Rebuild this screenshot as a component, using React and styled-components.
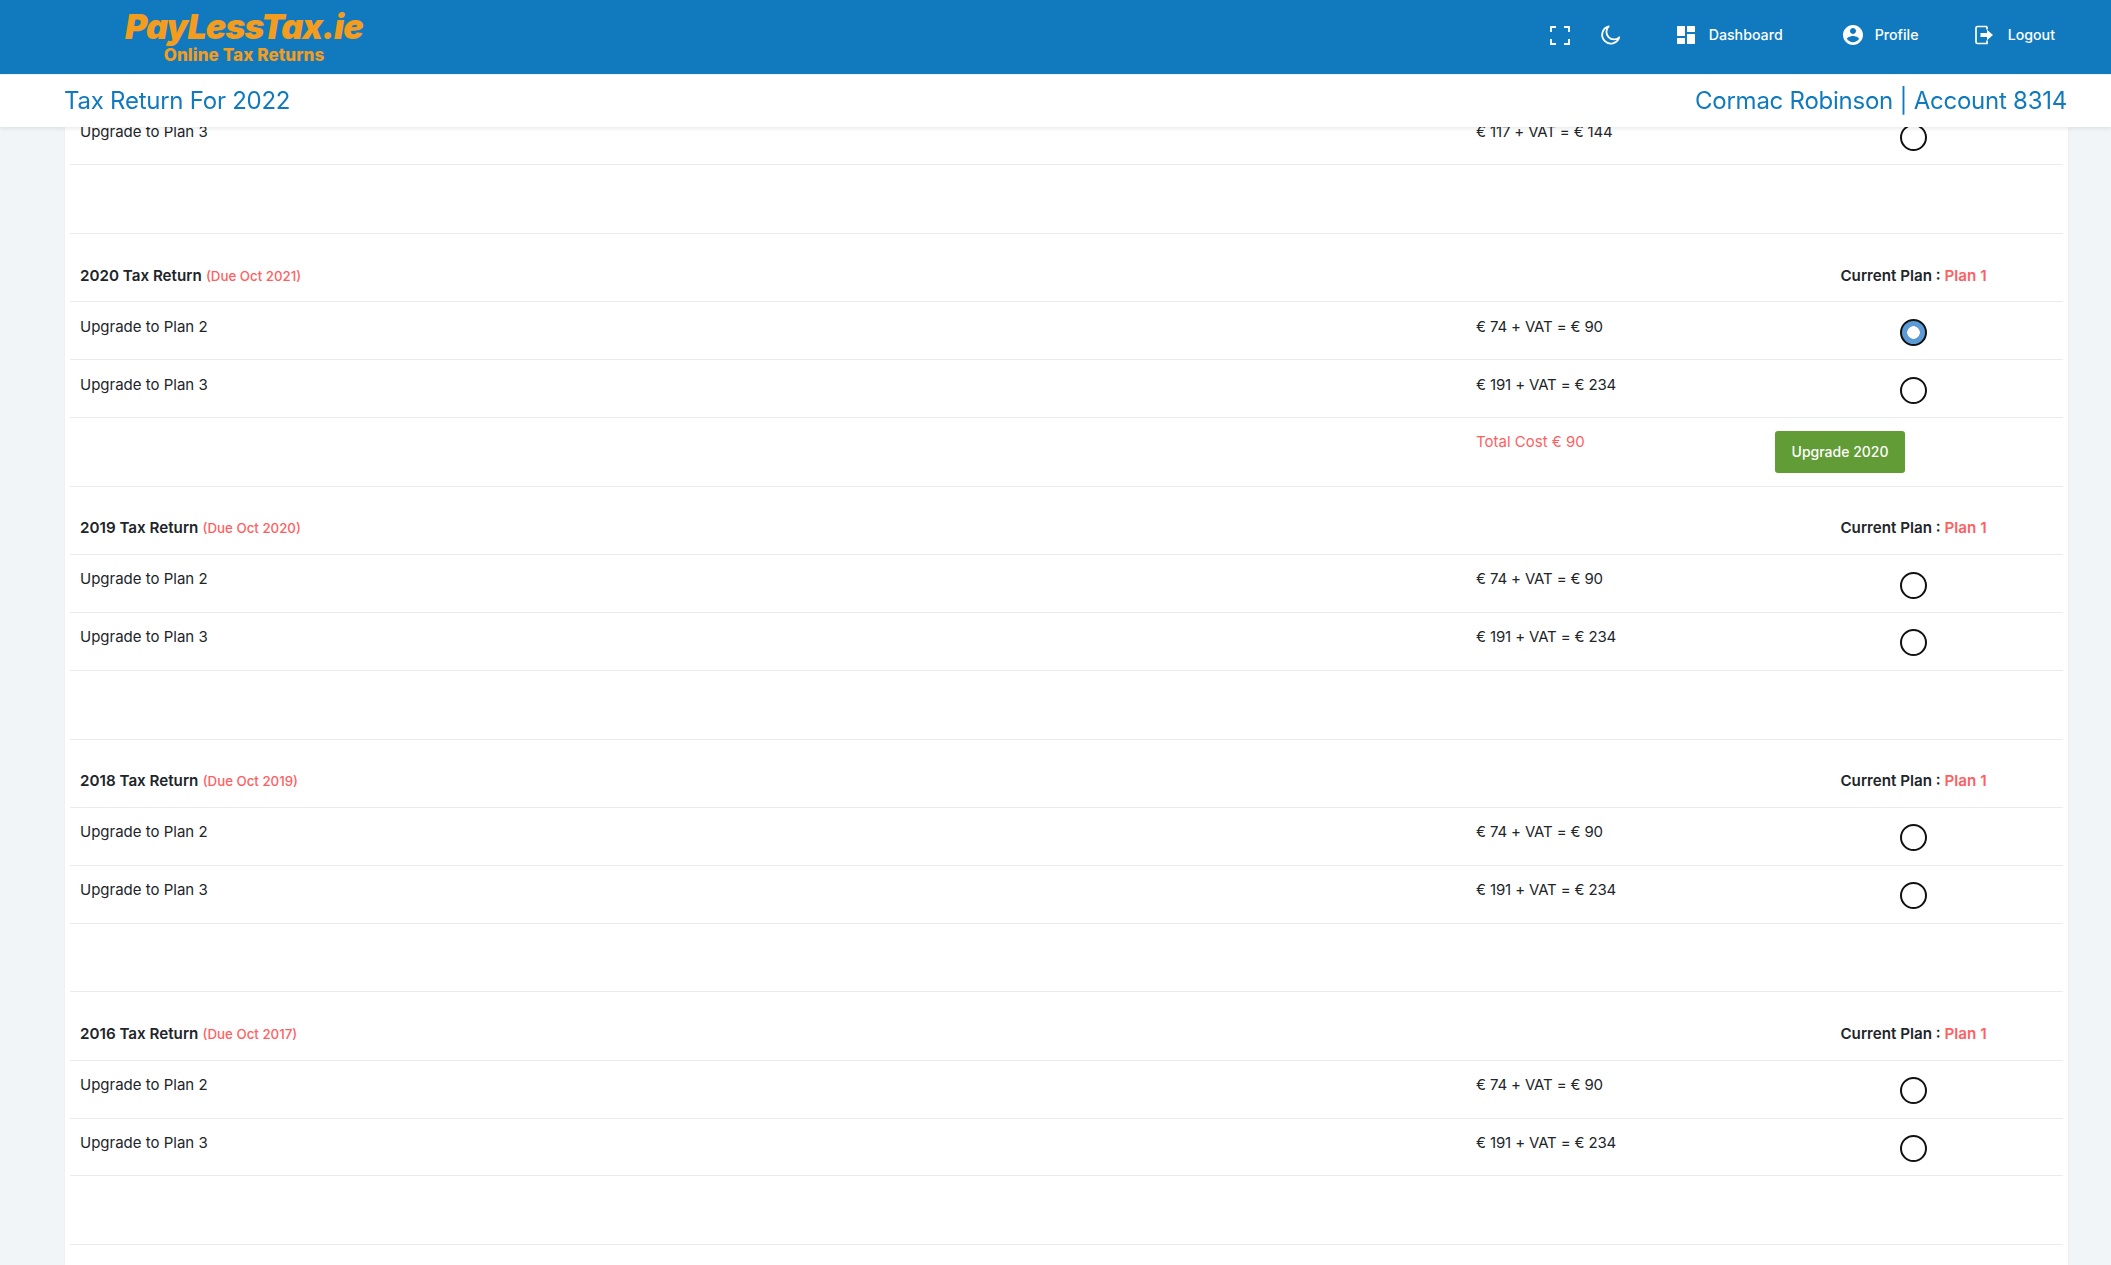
import styled, { createGlobalStyle } from 'styled-components';

const GlobalStyle = createGlobalStyle`
  html, body {
    margin: 0;
    height: 100%;
    overflow: hidden;
    background: #f2f5f8;
    font-family: 'Inter', 'Liberation Sans', sans-serif;
    color: #212529;
  }
  * { box-sizing: border-box; }
`;

const PREVIOUS_ROWS = [{ label: 'Upgrade to Plan 3', price: '€ 117 + VAT = € 144' }];

const DEFAULT_ROWS = [
  { label: 'Upgrade to Plan 2', price: '€ 74 + VAT = € 90' },
  { label: 'Upgrade to Plan 3', price: '€ 191 + VAT = € 234' },
];

const RETURNS = [
  { year: 2020, due: 'Due Oct 2021', selected: 0, total: 'Total Cost € 90' },
  { year: 2019, due: 'Due Oct 2020' },
  { year: 2018, due: 'Due Oct 2019' },
  { year: 2016, due: 'Due Oct 2017' },
];

const FullscreenIcon = () => (
  <svg width="20" height="19" viewBox="0 0 20 19" fill="none" stroke="#fff" strokeWidth="1.8">
    <path d="M1 6V1h5M14 1h5v5M19 13v5h-5M6 18H1v-5" />
  </svg>
);

const MoonIcon = () => (
  <svg width="22" height="22" viewBox="0 0 24 24" fill="none" stroke="#fff" strokeWidth="2" strokeLinejoin="round">
    <path d="M21 14.5A9.5 9.5 0 1 1 9.5 2.6a8 8 0 0 0 11.5 11.9z" />
  </svg>
);

const DashboardIcon = () => (
  <svg width="24" height="24" viewBox="0 0 24 24" fill="#fff">
    <path d="M3 13h8V3H3v10zm0 8h8v-6H3v6zm10 0h8V11h-8v10zm0-18v6h8V3h-8z" />
  </svg>
);

const ProfileIcon = () => (
  <svg width="24" height="24" viewBox="0 0 24 24" fill="#fff">
    <path d="M12 2C6.48 2 2 6.48 2 12s4.48 10 10 10 10-4.48 10-10S17.52 2 12 2zm0 3c1.66 0 3 1.34 3 3s-1.34 3-3 3-3-1.34-3-3 1.34-3 3-3zm0 14.2c-2.5 0-4.71-1.28-6-3.22.03-1.99 4-3.08 6-3.08 1.99 0 5.97 1.09 6 3.08-1.29 1.94-3.5 3.22-6 3.22z" />
  </svg>
);

const LogoutIcon = () => (
  <svg width="20" height="20" viewBox="0 0 20 20">
    <path d="M13 1.5H3.5A1.5 1.5 0 0 0 2 3v14a1.5 1.5 0 0 0 1.5 1.5H13v-3" fill="none" stroke="#fff" strokeWidth="1.7" />
    <path d="M13 1.5v3" fill="none" stroke="#fff" strokeWidth="1.7" />
    <path d="M6.5 8H13V4.8l6 5.2-6 5.2V12H6.5z" fill="#fff" />
  </svg>
);

const PlanRow = ({ label, price, checked }) => (
  <Row>
    <Cell>{label}</Cell>
    <PriceCell>{price}</PriceCell>
    <RadioCell>
      <Radio type="radio" checked={!!checked} readOnly />
    </RadioCell>
  </Row>
);

const ReturnBlock = ({ year, due, selected, total }) => (
  <>
    <HeadRow>
      <Cell>
        <YearLabel>{year} Tax Return</YearLabel> <Due>({due})</Due>
      </Cell>
      <Cell />
      <PlanCell>
        Current Plan : <Red>Plan 1</Red>
      </PlanCell>
    </HeadRow>
    {DEFAULT_ROWS.map((row, i) => (
      <PlanRow key={row.label} {...row} checked={selected === i} />
    ))}
    <FootRow>
      <Cell />
      <TotalCell>{total}</TotalCell>
      <ButtonCell>{total && <UpgradeButton>Upgrade {year}</UpgradeButton>}</ButtonCell>
    </FootRow>
  </>
);

const App = () => (
  <>
    <GlobalStyle />
    <TopBar>
      <Brand>
        <BrandName>PayLessTax.ie</BrandName>
        <BrandTag>Online Tax Returns</BrandTag>
      </Brand>
      <Nav>
        <ToolIcon $width={50}><FullscreenIcon /></ToolIcon>
        <ToolIcon $width={74}><MoonIcon /></ToolIcon>
        <NavItem $width={167} $gap={11}><DashboardIcon />Dashboard</NavItem>
        <NavItem $width={133} $gap={10}><ProfileIcon />Profile</NavItem>
        <NavItem $gap={14}><LogoutIcon />Logout</NavItem>
      </Nav>
    </TopBar>
    <TitleBar>
      <Title>Tax Return For 2022</Title>
      <Title>Cormac Robinson | Account 8314</Title>
    </TitleBar>
    <Page>
      <Card>
        {PREVIOUS_ROWS.map((row) => (
          <PlanRow key={row.label} {...row} />
        ))}
        <FootRow>
          <Cell />
          <Cell />
          <Cell />
        </FootRow>
        {RETURNS.map((item) => (
          <ReturnBlock key={item.year} {...item} />
        ))}
      </Card>
    </Page>
  </>
);

const TopBar = styled.header`
  position: fixed;
  top: 0;
  left: 0;
  right: 0;
  z-index: 20;
  height: 74px;
  background: #117abf;
  display: flex;
  align-items: center;
  padding: 2px 56px 2px 125px;
`;

const Brand = styled.div`
  display: flex;
  flex-direction: column;
  align-items: center;
  width: 238px;
`;

const BrandName = styled.div`
  font-size: 34px;
  line-height: 36px;
  font-weight: 900;
  font-style: italic;
  letter-spacing: -0.8px;
  color: #f49c1e;
`;

const BrandTag = styled.div`
  font-size: 17px;
  line-height: 20px;
  font-weight: 800;
  letter-spacing: 0.1px;
  color: #f49c1e;
`;

const Nav = styled.nav`
  margin-left: auto;
  margin-top: -4px;
  display: flex;
  align-items: center;
  color: #fff;
`;

const ToolIcon = styled.div`
  width: ${(p) => p.$width}px;
  display: flex;
  align-items: center;
`;

const NavItem = styled.div`
  width: ${(p) => (p.$width ? `${p.$width}px` : 'auto')};
  display: flex;
  align-items: center;
  gap: ${(p) => p.$gap}px;
  font-size: 14.2px;
  font-weight: 500;
  line-height: 24px;
`;

const TitleBar = styled.div`
  position: fixed;
  top: 75px;
  left: 0;
  right: 0;
  z-index: 10;
  height: 52px;
  background: #fff;
  display: flex;
  align-items: center;
  justify-content: space-between;
  padding: 0 44px 0 64px;
  box-shadow: 0 2px 4px rgba(0, 0, 0, 0.08);
`;

const Title = styled.div`
  font-size: 24px;
  line-height: 32px;
  letter-spacing: -0.25px;
  color: #117abf;
`;

const Page = styled.main`
  padding: 107.5px 43px 0 65px;
  height: 100vh;
  overflow: hidden;
`;

const Card = styled.div`
  background: #fff;
  min-height: 100%;
  padding: 0 5px;
  box-shadow: 0 0 2px rgba(0, 0, 0, 0.06);
`;

const Row = styled.div`
  display: grid;
  grid-template-columns: calc(70% + 1px) 15% calc(15% - 1px);
  height: 57.9px;
  border-bottom: 1px solid #e9ebec;
  font-size: 15px;
  line-height: 22px;
`;

const HeadRow = styled(Row)`
  height: 68.2px;
  padding-top: 17.2px;
`;

const FootRow = styled(Row)`
  height: 68.8px;
`;

const Cell = styled.div`
  padding: 13.3px 10px 0;
`;

const PriceCell = styled(Cell)`
  letter-spacing: -0.15px;
`;

const RadioCell = styled(Cell)`
  padding: 16.4px 1px 0 0;
  display: flex;
  justify-content: center;
`;

const PlanCell = styled(Cell)`
  padding-right: 11px;
  text-align: center;
  font-size: 15.2px;
  font-weight: 600;
`;

const TotalCell = styled(Cell)`
  padding-top: 13px;
  color: #ff5f63;
`;

const ButtonCell = styled(Cell)`
  padding-top: 13px;
`;

const Radio = styled.input`
  appearance: none;
  margin: 0;
  width: 27px;
  height: 27px;
  border-radius: 50%;
  border: 2px solid #111;
  background: #fff;

  &:checked {
    background: radial-gradient(circle, #fff 0 6px, #5a9bd8 6.5px);
  }
`;

const YearLabel = styled.span`
  font-size: 15.2px;
  font-weight: 600;
`;

const Due = styled.span`
  font-size: 13.3px;
  font-weight: 500;
  color: #ff5f63;
`;

const Red = styled.span`
  color: #ff5f63;
`;

const UpgradeButton = styled.button`
  width: 130px;
  height: 42px;
  border: none;
  border-radius: 3px;
  background: #629c37;
  color: #fff;
  font: 500 14px 'Inter', sans-serif;
  padding: 0 0 2px;
`;

export default App;
